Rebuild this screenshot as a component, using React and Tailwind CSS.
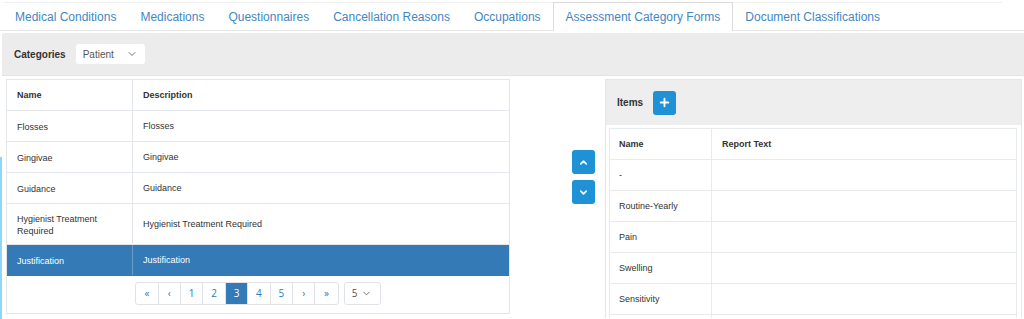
import React from "react";
import { ChevronDown, ChevronUp, Plus } from "lucide-react";

const tabs = [
  "Medical Conditions",
  "Medications",
  "Questionnaires",
  "Cancellation Reasons",
  "Occupations",
  "Assessment Category Forms",
  "Document Classifications",
];

const categories = [
  { name: "Flosses", desc: "Flosses" },
  { name: "Gingivae", desc: "Gingivae" },
  { name: "Guidance", desc: "Guidance" },
  { name: "Hygienist Treatment Required", desc: "Hygienist Treatment Required", tall: true },
  { name: "Justification", desc: "Justification", selected: true },
];

const items = ["-", "Routine-Yearly", "Pain", "Swelling", "Sensitivity", ""];

const pages = ["«", "‹", "1", "2", "3", "4", "5", "›", "»"];

function Tabs() {
  return (
    <div className="flex items-end h-[31px] pl-[3px] border-b border-[#e8e8e8]">
      {tabs.map((t) => {
        const active = t === "Assessment Category Forms";
        return (
          <div
            key={t}
            className={`flex items-center text-[12px] text-[#3f87c4] border-t ${
              active
                ? "border border-b-0 border-[#dcdcdc] bg-white -mb-px h-[29px] pb-px px-3"
                : "border-[#f0f0f0] h-[28px] px-3"
            }`}
          >
            {t}
          </div>
        );
      })}
      <div className="h-[28px] w-[110px] border-t border-[#f0f0f0]" />
    </div>
  );
}

function CategoriesTable() {
  return (
    <div className="ml-[6px] w-[504px] h-[235px] border border-[#e3e6ea] flex flex-col text-[9px] text-[#333]">
      <div className="grid grid-cols-[126px_1fr] h-[31px] shrink-0 border-b border-[#e3e6ea] font-bold">
        <div className="flex items-center pt-px px-[10px] border-r border-[#e3e6ea]">Name</div>
        <div className="flex items-center pt-px px-[10px]">Description</div>
      </div>
      {categories.map((c) => (
        <div
          key={c.name}
          className={`grid grid-cols-[126px_1fr] shrink-0 border-b ${c.tall ? "h-[41px]" : "h-[31px]"} ${
            c.selected ? "bg-[#337ab7] text-white border-[#337ab7]" : "border-[#e3e6ea]"
          }`}
        >
          <div
            className={`flex items-center pt-px px-[10px] leading-[12px] border-r ${
              c.selected ? "border-[#6b9dcc]" : "border-[#e3e6ea]"
            }`}
          >
            {c.name}
          </div>
          <div className="flex items-center pt-px px-[10px]">{c.desc}</div>
        </div>
      ))}
      <div className="flex justify-center pt-[6px]">
        <div className="flex h-[23px] border border-[#dfe3e8] rounded-[3px] font-['Open_Sans',sans-serif] text-[10px] text-[#337ab7]">
          {pages.map((p, i) => (
            <div
              key={i}
              className={`w-[22.4px] flex items-center justify-center ${
                i < pages.length - 1 ? "border-r border-[#dfe3e8]" : ""
              } ${p === "3" ? "bg-[#337ab7] text-white" : ""}`}
            >
              {p}
            </div>
          ))}
        </div>
        <div className="ml-[5px] w-[37px] h-[23px] border border-[#dfe3e8] rounded-[3px] flex items-center pl-[7px] gap-[4px] font-['Open_Sans',sans-serif] text-[10px] text-[#555]">
          5
          <ChevronDown size={11} strokeWidth={1.8} className="text-[#555]" />
        </div>
      </div>
    </div>
  );
}

function ItemsPanel() {
  return (
    <div className="w-[417px] h-[239px] border border-[#e3e6ea] border-b-0 flex flex-col overflow-hidden">
      <div className="h-[45px] shrink-0 bg-[#eeeeee] flex items-center px-[11px] gap-[10px]">
        <span className="text-[10px] font-bold text-[#333]">Items</span>
        <div className="w-[23px] h-[24px] rounded-[3px] bg-[#1e92d4] flex items-center justify-center">
          <Plus size={13} strokeWidth={3.5} className="text-white" />
        </div>
      </div>
      <div className="p-[3px] pr-[4px] bg-white">
        <div className="border border-[#e8ebee] border-b-0 text-[9px] text-[#333]">
          <div className="grid grid-cols-[102px_1fr] h-[31px] border-b border-[#e8ebee] font-bold">
            <div className="flex items-center pt-px px-[9px] border-r border-[#e8ebee]">Name</div>
            <div className="flex items-center pt-px px-[10px]">Report Text</div>
          </div>
          {items.map((it, i) => (
            <div key={i} className="grid grid-cols-[102px_1fr] h-[31px] border-b border-[#e8ebee]">
              <div className="flex items-center pt-px px-[9px] border-r border-[#e8ebee]">{it}</div>
              <div />
            </div>
          ))}
        </div>
      </div>
    </div>
  );
}

export default function App() {
  return (
    <div className="relative w-[1024px] h-[319px] overflow-hidden bg-white font-['Liberation_Sans',Arial,sans-serif]">
      <Tabs />

      {/* Category filter */}
      <div className="mt-[2px] ml-[2px] h-[43px] bg-[#ececec] rounded-tl-[3px] border-b border-[#e2e2e2] flex items-center pl-[12px] gap-[10px]">
        <span className="text-[10px] font-bold text-[#333]">Categories</span>
        <div className="w-[69px] h-[20px] bg-white rounded-[3px] flex items-center justify-between pl-[7px] pr-[7px] text-[10px] text-[#555]">
          Patient
          <ChevronDown size={12} strokeWidth={1.6} className="text-[#555]" />
        </div>
      </div>

      <div className="flex pt-[3px]">
        <div className="w-[510px]">
          <CategoriesTable />
        </div>
        <div className="w-[95px] pl-[62px] pt-[71px] flex flex-col gap-[6px]">
          <div className="w-[23px] h-[24px] rounded-[3px] bg-[#1e92d4] flex items-center justify-center">
            <ChevronUp size={11} strokeWidth={3.5} className="text-white" />
          </div>
          <div className="w-[23px] h-[24px] rounded-[3px] bg-[#1e92d4] flex items-center justify-center">
            <ChevronDown size={11} strokeWidth={3.5} className="text-white" />
          </div>
        </div>
        <ItemsPanel />
      </div>

      {/* focus marker on the left edge */}
      <div className="absolute left-0 top-[157px] w-[2px] h-[162px] bg-[#8fd5f7]" />
    </div>
  );
}
